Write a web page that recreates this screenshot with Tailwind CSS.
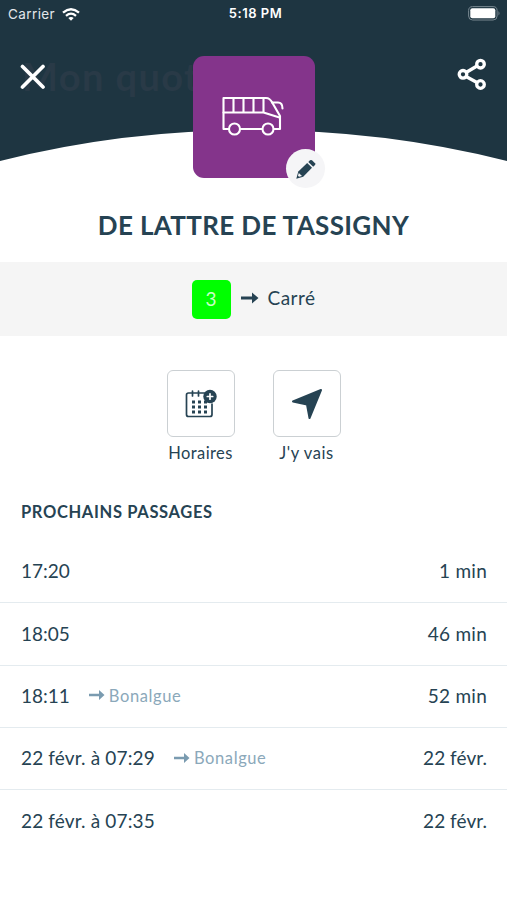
<!DOCTYPE html>
<html lang="fr">
<head>
  <meta charset="UTF-8">
  <title>De Lattre de Tassigny</title>
  <script src="https://cdn.jsdelivr.net/npm/@tailwindcss/browser@4"></script>
</head>
<body class="bg-white font-[Lato,sans-serif] text-[#264353]">
  <div class="w-[507px] h-[900px] overflow-hidden bg-white">

    <!-- Header -->
    <header class="relative h-[197px]">
      <svg class="absolute inset-0" width="507" height="170" viewBox="0 0 507 170">
        <path d="M0 0H507V161Q385 130 253.500 130Q122 130 0 161Z" fill="#1e3541"/>
      </svg>
      <span class="absolute left-[22px] top-[53px] whitespace-nowrap text-[38px] leading-[46px] font-bold tracking-[1.4px] text-[#293a47]">Mon quot</span>

      <div class="relative grid grid-cols-3 items-center h-7 px-2 font-[Inter,sans-serif] text-[13.5px] text-white">
        <div class="flex items-center gap-[7px] text-[#e3e7ea]">
          <span class="tracking-[0.4px]">Carrier</span>
          <svg width="18" height="13" viewBox="0 0 18 13" fill="none" stroke="white" stroke-width="2.300">
            <path d="M1 4.600Q9-2.200 17 4.600M4 7.800Q9 3.500 14 7.800"/>
            <path d="M6.300 10Q9 7.800 11.700 10L9 12.700Z" fill="white" stroke="none"/>
          </svg>
        </div>
        <span class="pl-1 text-center font-semibold text-[13px] tracking-[0.5px] whitespace-nowrap">5:18 PM</span>
        <svg class="justify-self-end -mr-0.5 -mt-0.5" width="33" height="15" viewBox="0 0 33 15">
          <rect x="0.600" y="0.600" width="28.500" height="13.400" rx="4" fill="none" stroke="#788790"/>
          <rect x="2.300" y="2.300" width="25" height="10" rx="2" fill="white"/>
          <path d="M30.500 5Q32.500 7.300 30.500 9.500Z" fill="#788790"/>
        </svg>
      </div>

      <div class="relative flex items-start justify-between pl-5 pr-[19px] pt-[28px]">
        <svg class="mt-2" width="26" height="26" viewBox="0 0 26 26" stroke="white" stroke-width="3.700" stroke-linecap="round">
          <path d="M2.500 2.500L23 23M23 2.500L2.500 23"/>
        </svg>
        <svg class="mt-[2px]" width="31" height="34" viewBox="0 0 31 34" fill="none" stroke="white" stroke-width="3.300">
          <path d="M9 14.500L20 8M9 18.500L20 24.500"/>
          <circle cx="6" cy="16.300" r="3.800"/>
          <circle cx="23.500" cy="6.200" r="3.800"/>
          <circle cx="23.500" cy="26.500" r="3.800"/>
        </svg>
      </div>

      <div class="absolute left-[193px] top-14 flex items-center justify-center w-[122px] h-[122px] rounded-[11px] bg-[#84348b]">
        <svg class="-mt-1 -ml-0.5" width="64" height="42" viewBox="0 0 64 42" fill="none" stroke="white" stroke-width="2.100" stroke-linejoin="round" stroke-linecap="round">
          <path d="M8 35H2.500V4H45Q49 4 51.500 9L59 22V35H53M19 35H41"/>
          <path d="M2.500 18.500H42.500L58.500 23.500M12.500 4V18.500M22.500 4V18.500M32.500 4V18.500M42.500 4V18.500M51 8.500H57Q61.500 8.500 61.500 14.500"/>
          <circle cx="13.500" cy="35" r="5.500"/>
          <circle cx="47" cy="35" r="5.500"/>
        </svg>
      </div>
      <div class="absolute left-[286px] top-[149px] flex items-center justify-center w-[39px] h-[39px] rounded-full bg-[#f5f5f7]">
        <svg width="22" height="22" viewBox="0 0 22 22" fill="#264353">
          <path d="M1.300 20.700L3.300 13.500L12.200 5L17 9.800L8.200 18.700Z"/>
          <path d="M13.300 4L15 2.300Q16 1.500 17 2.300L20 5.300Q20.800 6.200 20 7.100L18.200 8.800Z"/>
          <path d="M3.800 15L7 18L4 18.700L3 17.700Z" fill="#f5f5f7"/>
        </svg>
      </div>
    </header>

    <h1 class="h-[65px] pt-[10px] text-center text-[26px] leading-9 font-bold tracking-[0.35px] whitespace-nowrap">DE LATTRE DE TASSIGNY</h1>

    <!-- Line and direction -->
    <div class="flex items-center justify-center h-[74px] bg-[#f5f5f5]">
      <span class="flex items-center justify-center w-[39px] h-[39px] rounded-[5px] bg-[#00ff00] text-[19px] text-[#c9ffc5]">3</span>
      <svg class="ml-[10px] -mt-0.5" width="18" height="12" viewBox="0 0 18 12" fill="#264353">
        <path d="M0 4.500H11V0.500L17.500 6L11 11.500V7.500H0Z"/>
      </svg>
      <span class="ml-[9px] -mt-px text-[19px] tracking-[0.45px]">Carré</span>
    </div>

    <!-- Actions -->
    <div class="flex justify-center gap-[38px] h-[162px] pt-[34px]">
      <div class="flex flex-col items-center w-[68px]">
        <div class="flex items-center justify-center w-[68px] h-[67px] rounded-md border-[1.5px] border-[#cbd0d3]">
          <svg width="32" height="30" viewBox="0 0 32 30" fill="none" stroke="#264353" stroke-width="1.700" stroke-linecap="round">
            <path d="M20 4H3.500Q1.500 4 1.500 6V25.500Q1.500 27.500 3.500 27.500H25Q27 27.500 27 25.500V15M7.500 2V7M13.500 2V7"/>
            <path d="M7 13H10M13 13H16M19 13H22M7 18H10M13 18H16M19 18H22M7 23H10M13 23H16M19 23H22" stroke-width="2.800" stroke-linecap="butt"/>
            <circle cx="25" cy="7.500" r="6.700" fill="#264353" stroke="none"/>
            <path d="M25 4.800V10.200M22.300 7.500H27.700" stroke="white"/>
          </svg>
        </div>
        <span class="mt-1 text-[16.5px] leading-6 tracking-[0.4px] whitespace-nowrap">Horaires</span>
      </div>
      <div class="flex flex-col items-center w-[68px]">
        <div class="flex items-center justify-center w-[68px] h-[67px] rounded-md border-[1.5px] border-[#cbd0d3]">
          <svg width="32" height="32" viewBox="0 0 32 32" fill="#264353" stroke="#264353" stroke-width="2" stroke-linejoin="round">
            <path d="M2 13.500L30 2L18.500 30L16 16.500Z"/>
          </svg>
        </div>
        <span class="mt-1 text-[16.5px] leading-6 tracking-[0.6px] whitespace-nowrap">J'y vais</span>
      </div>
    </div>

    <!-- Next departures -->
    <h2 class="h-[43px] pl-[21px] pt-[2px] text-[16.5px] leading-6 font-bold tracking-[0.65px]">PROCHAINS PASSAGES</h2>
    <ul class="text-[19px]">
      <li class="flex items-center h-[62.3px] pl-[21px] pr-5 border-b border-[#e4ebef]">
        <span>17:20</span>
        <span class="ml-auto tracking-[0.25px]">1 min</span>
      </li>
      <li class="flex items-center h-[62.3px] pl-[21px] pr-5 border-b border-[#e4ebef]">
        <span>18:05</span>
        <span class="ml-auto tracking-[0.25px]">46 min</span>
      </li>
      <li class="flex items-center h-[62.3px] pl-[21px] pr-5 border-b border-[#e4ebef]">
        <span>18:11</span>
        <svg class="ml-[19px] -mt-0.5" width="16" height="10" viewBox="0 0 16 10" fill="#7a9bb0"><path d="M0 3.700H10V0L15.500 5L10 10V6.300H0Z"/></svg>
        <span class="ml-1 text-[16.5px] tracking-[0.6px] text-[#8ba8ba]">Bonalgue</span>
        <span class="ml-auto tracking-[0.25px]">52 min</span>
      </li>
      <li class="flex items-center h-[62.3px] pl-[21px] pr-5 border-b border-[#e4ebef]">
        <span class="tracking-[0.15px]">22 févr. à 07:29</span>
        <svg class="ml-[19px] -mt-0.5" width="16" height="10" viewBox="0 0 16 10" fill="#7a9bb0"><path d="M0 3.700H10V0L15.500 5L10 10V6.300H0Z"/></svg>
        <span class="ml-1 text-[16.5px] tracking-[0.6px] text-[#8ba8ba]">Bonalgue</span>
        <span class="ml-auto tracking-[0.05px]">22 févr.</span>
      </li>
      <li class="flex items-center h-[62.3px] pl-[21px] pr-5">
        <span class="tracking-[0.15px]">22 févr. à 07:35</span>
        <span class="ml-auto tracking-[0.05px]">22 févr.</span>
      </li>
    </ul>
  </div>
</body>
</html>
